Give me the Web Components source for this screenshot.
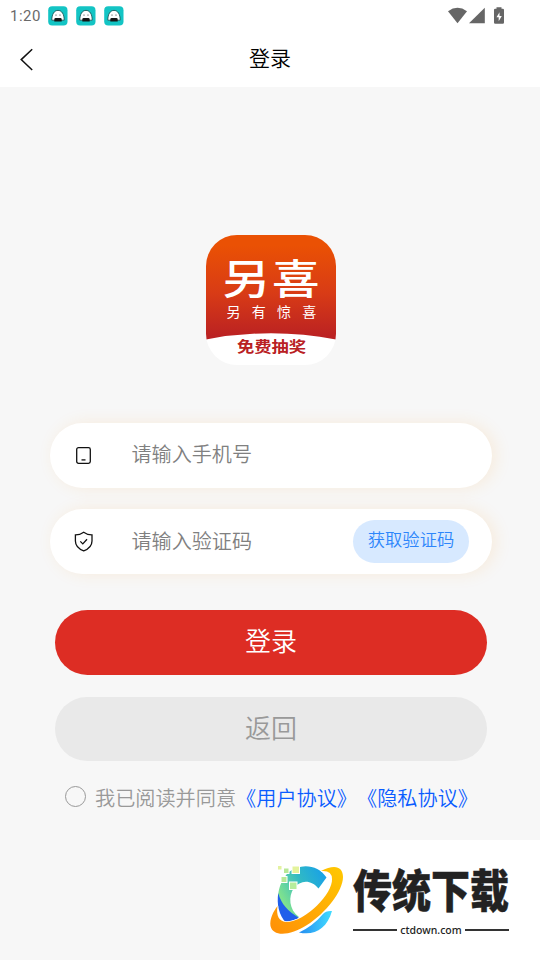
<!DOCTYPE html>
<html lang="zh-CN">
<head>
<meta charset="utf-8">
<meta name="viewport" content="width=device-width, initial-scale=1">
<title>登录</title>
<style>
    html, body {
        margin: 0;
        height: 100%;
        overflow: hidden;
    }
    body {
        background: #f7f7f7;
        font-family: Roboto, "Noto Sans CJK SC", sans-serif;
        font-weight: 350;
        text-spacing-trim: space-all;
    }
</style>
</head>
<body>
<login-page>
    <status-bar slot="top" time="1:20"></status-bar>
    <nav-bar slot="top">登录</nav-bar>
    <app-logo>
        <span slot="name">另喜</span>
        <span slot="slogan">另有惊喜</span>
        <span slot="ribbon">免费抽奖</span>
    </app-logo>
    <input-field icon="phone">请输入手机号</input-field>
    <input-field icon="shield">请输入验证码<code-button slot="action">获取验证码</code-button></input-field>
    <pill-button kind="primary">登录</pill-button>
    <pill-button kind="plain">返回</pill-button>
    <agree-row>我已阅读并同意<span slot="links">《用户协议》《隐私协议》</span></agree-row>
    <site-badge slot="badge">传统下载<span slot="domain">ctdown.com</span></site-badge>
</login-page>

<script>
    class LoginPage extends HTMLElement {
        constructor() {
            super();
            this.attachShadow({ mode: 'open' });
            this.shadowRoot.innerHTML = `
            <style>
                :host {
                    display: block;
                    position: relative;
                    width: 540px;
                    height: 960px;
                    overflow: hidden;
                    background: #f7f7f7;
                }
                header {
                    background: #fff;
                    height: 87px;
                }
                main {
                    display: flex;
                    flex-direction: column;
                    padding: 148px 48px 0 50px;
                }
            </style>
            <header><slot name="top"></slot></header>
            <main><slot></slot></main>
            <slot name="badge"></slot>
            `;
        }
    }
    customElements.define('login-page', LoginPage);

    class StatusBar extends HTMLElement {
        constructor() {
            super();
            this.attachShadow({ mode: 'open' });
            const app = `
                <svg width="20" height="20" viewBox="0 0 20 20">
                    <rect x=".2" y=".2" width="19.3" height="19.3" rx="4" fill="#13c4c4"/>
                    <path d="M3.8 14.2c0-6 2.4-9.8 6.2-9.8s6.2 3.8 6.2 9.8z" fill="#fff" stroke="#17494b" stroke-width=".8"/>
                    <path d="M6.3 15.5v-2.1q0-1.3 1.3-1.3h4.8q1.3 0 1.3 1.3v2.1z" fill="#151515"/>
                    <circle cx="8" cy="9" r=".6" fill="#222"/><circle cx="12" cy="9" r=".6" fill="#222"/>
                </svg>`;
            this.shadowRoot.innerHTML = `
            <style>
                :host {
                    display: flex;
                    align-items: center;
                    height: 31px;
                    padding: 0 35px 0 10px;
                    box-sizing: border-box;
                    color: #6a6a6a;
                    font: 400 15px/31px Roboto, sans-serif;
                }
                time { width: 38px; letter-spacing: .5px; padding-top: 1px; }
                .apps { display: flex; gap: 8px; flex: 1; }
                svg { display: block; }
            </style>
            <time>${this.getAttribute('time')}</time>
            <div class="apps">${app}${app}${app}</div>
            <svg width="58" height="20" viewBox="447 5 58 20" fill="#666">
                <path d="M448 10.2Q457.5 3.3 467 10.2L457.5 22.3z"/>
                <path d="M484.8 6.8v15.5H469z"/>
                <path d="M496.5 7.8v-1.5h5v1.5h1.3q1.2 0 1.2 1.2v12.5q0 1.2-1.2 1.2h-7.6q-1.2 0-1.2-1.2V9q0-1.2 1.2-1.2z"/>
                <path d="M499.5 11.2l-3 5h2.2v4l3.1-5.3h-2.3z" fill="#fff"/>
            </svg>
            `;
        }
    }
    customElements.define('status-bar', StatusBar);

    class NavBar extends HTMLElement {
        constructor() {
            super();
            this.attachShadow({ mode: 'open' });
            this.shadowRoot.innerHTML = `
            <style>
                :host {
                    display: grid;
                    grid-template-columns: 54px 1fr 54px;
                    align-items: center;
                    height: 56px;
                    color: #000;
                    font-size: 21px;
                    line-height: 56px;
                    text-align: center;
                }
                svg { display: block; margin-left: 18px; }
            </style>
            <svg width="18" height="24" viewBox="0 0 18 24" fill="none" stroke="#111" stroke-width="1.5">
                <path d="M14.2 2.2L3.2 12.6l11 10.4"/>
            </svg>
            <span><slot></slot></span>
            `;
        }
    }
    customElements.define('nav-bar', NavBar);

    class AppLogo extends HTMLElement {
        constructor() {
            super();
            this.attachShadow({ mode: 'open' });
            this.shadowRoot.innerHTML = `
            <style>
                :host {
                    display: grid;
                    width: 130px;
                    height: 130px;
                    margin: 0 0 58px 156px;
                    border-radius: 31px;
                    overflow: hidden;
                    background: #fff;
                    color: #fff;
                }
                svg, .texts { grid-area: 1 / 1; }
                .texts {
                    display: flex;
                    flex-direction: column;
                    align-items: center;
                    white-space: nowrap;
                }
                .name {
                    font-size: 44px;
                    line-height: 50px;
                    height: 48px;
                    font-weight: 500;
                    letter-spacing: 2px;
                    margin: 20px 0 0 2px;
                    transform: scale(1.08, .94);
                }
                .slogan {
                    font-size: 14px;
                    line-height: 18px;
                    font-weight: 400;
                    letter-spacing: 11.3px;
                    padding-left: 12px;
                }
                .ribbon {
                    color: #b92023;
                    font-size: 17.3px;
                    line-height: 20px;
                    font-weight: 700;
                    margin: 16px 0 0 1px;
                    transform: scaleY(.88);
                }
            </style>
            <svg width="130" height="130" viewBox="0 0 130 130">
                <defs>
                    <linearGradient id="bg" gradientUnits="userSpaceOnUse" x1="0" y1="0" x2="0" y2="130">
                        <stop offset=".08" stop-color="#ea5104"/>
                        <stop offset=".45" stop-color="#d83b16"/>
                        <stop offset=".8" stop-color="#b92023"/>
                    </linearGradient>
                </defs>
                <path d="M0 0H130V104.5Q65 92 0 104.5z" fill="url(#bg)"/>
            </svg>
            <div class="texts">
                <div class="name"><slot name="name"></slot></div>
                <div class="slogan"><slot name="slogan"></slot></div>
                <div class="ribbon"><slot name="ribbon"></slot></div>
            </div>
            `;
        }
    }
    customElements.define('app-logo', AppLogo);

    const fieldIcons = {
        phone: `<rect x="3.7" y="2.7" width="13.6" height="15.6" rx="1.8"/><path d="M8.5 14.9h4"/>`,
        shield: `<path d="M10.7 1.2Q14.5 4 19 3.9V10q0 6.6-8.3 9.9Q2.4 16.6 2.4 10V3.9Q6.9 4 10.7 1.2zM7.3 10.4l2.5 2.5 4.2-4.7"/>`
    };

    class InputField extends HTMLElement {
        constructor() {
            super();
            this.attachShadow({ mode: 'open' });
            this.shadowRoot.innerHTML = `
            <style>
                :host {
                    display: flex;
                    align-items: center;
                    box-sizing: border-box;
                    height: 65px;
                    margin-bottom: 21px;
                    padding: 0 23px;
                    border-radius: 33px;
                    background: #fff;
                    box-shadow: 4px 0 16px rgba(255, 165, 50, .13);
                    color: #808080;
                    font-size: 20.1px;
                    line-height: 64px;
                }
                :host([icon="shield"]) { line-height: 66px; }
                svg { display: block; width: 22px; margin-right: 36.5px; }
                span { flex: 1; height: 65px; }
            </style>
            <svg height="22" viewBox="0 0 22 22" fill="none" stroke="#111" stroke-width="1.3">${fieldIcons[this.getAttribute('icon')]}</svg>
            <span><slot></slot></span>
            <slot name="action"></slot>
            `;
        }
    }
    customElements.define('input-field', InputField);

    class CodeButton extends HTMLElement {
        constructor() {
            super();
            this.attachShadow({ mode: 'open' });
            this.shadowRoot.innerHTML = `
            <style>
                :host {
                    display: block;
                    width: 116px;
                    height: 43px;
                    border-radius: 22px;
                    background: #d7e9ff;
                    color: #2d86fb;
                    font-size: 17.3px;
                    line-height: 41px;
                    text-align: center;
                }
            </style>
            <slot></slot>
            `;
        }
    }
    customElements.define('code-button', CodeButton);

    class PillButton extends HTMLElement {
        constructor() {
            super();
            this.attachShadow({ mode: 'open' });
            this.shadowRoot.innerHTML = `
            <style>
                :host {
                    display: block;
                    height: 65px;
                    margin: 15px 5px 0;
                    border-radius: 33px;
                    font-size: 26px;
                    line-height: 64px;
                    text-align: center;
                }
                :host([kind="primary"]) {
                    background: #dd2d24;
                    color: #fff;
                }
                :host([kind="plain"]) {
                    height: 64px;
                    margin-top: 22px;
                    background: #e9e9e9;
                    color: #999;
                }
            </style>
            <slot></slot>
            `;
        }
    }
    customElements.define('pill-button', PillButton);

    class AgreeRow extends HTMLElement {
        constructor() {
            super();
            this.attachShadow({ mode: 'open' });
            this.shadowRoot.innerHTML = `
            <style>
                :host {
                    display: flex;
                    align-items: center;
                    margin: 20px 0 0 15px;
                    height: 31px;
                    color: #999;
                    font-size: 20.16px;
                    line-height: 31px;
                    white-space: nowrap;
                }
                i {
                    box-sizing: border-box;
                    width: 21px;
                    height: 21px;
                    margin-right: 9px;
                    border: 1px solid #999;
                    border-radius: 50%;
                }
                span { padding-top: 5px; }
                .links { color: #0a5cff; }
            </style>
            <i></i><span><slot></slot></span><span class="links"><slot name="links"></slot></span>
            `;
        }
    }
    customElements.define('agree-row', AgreeRow);

    class SiteBadge extends HTMLElement {
        constructor() {
            super();
            this.attachShadow({ mode: 'open' });
            this.shadowRoot.innerHTML = `
            <style>
                :host {
                    position: absolute;
                    right: 0;
                    bottom: 0;
                    display: flex;
                    box-sizing: border-box;
                    width: 280px;
                    height: 120px;
                    padding-left: 5px;
                    background: #fff;
                    color: #222;
                }
                svg { display: block; flex: none; }
                .words { width: 156px; margin: 24px 0 0 3px; }
                .title {
                    height: 58px;
                    font-size: 39px;
                    line-height: 59px;
                    font-weight: 900;
                    white-space: nowrap;
                    -webkit-text-stroke: .4px #222;
                    transform: scaleY(1.17);
                }
                .domain {
                    display: flex;
                    align-items: center;
                    gap: 3px;
                    font: 500 10.5px/16px "Noto Sans", sans-serif;
                }
                .domain::before, .domain::after {
                    content: "";
                    flex: 1;
                    height: 2px;
                    background: #333;
                }
            </style>
            <svg width="85" height="120" viewBox="265 840 85 120">
                <defs>
                    <linearGradient id="ring" x1="1" y1="0" x2="0" y2="1">
                        <stop offset="0" stop-color="#ffc800"/>
                        <stop offset="1" stop-color="#ff8f08"/>
                    </linearGradient>
                    <linearGradient id="arc" x1="0" y1=".6" x2="1" y2="0">
                        <stop offset="0" stop-color="#8be886"/>
                        <stop offset=".5" stop-color="#30b9c5"/>
                        <stop offset="1" stop-color="#149cee"/>
                    </linearGradient>
                    <linearGradient id="tail">
                        <stop offset="0" stop-color="#258cf0"/>
                        <stop offset="1" stop-color="#42dcff"/>
                    </linearGradient>
                </defs>
                <path d="M326.5 877.5C318 864 300 863 289 872C276 884 274 906 286 922L299 917C289 910 288 896 294 888C300 880 311 879 318.5 888.5z" fill="url(#arc)"/>
                <path d="M278.3 893C276.5 904 279 915 286 923L299 918C288 911 281 904 278.3 893z" fill="#205fea"/>
                <path d="M299 932.5C314 936 327 929 332 911Q326 910.5 323 914Q313 926 299 932.5z" fill="url(#tail)"/>
                <path d="M321 871C334 864 343 866 343 877C343 891 326 913 307 925C290 936 273 937 270.5 926C269.5 919 273 912 277.5 906C276 916 279 921 286 922C306 922 333 893 332 879Q332 870 321 871z" fill="url(#ring)" stroke="#fff" stroke-width="1.5" paint-order="stroke"/>
                <g stroke="#fff">
                    <rect x="277.5" y="865.5" width="4.5" height="4.5" fill="#e3f2a0"/>
                    <rect x="283.5" y="868" width="5.5" height="5.5" fill="#b8e897"/>
                    <rect x="292" y="866" width="7.5" height="7.5" fill="#e4f39c"/>
                    <rect x="281" y="876.5" width="6" height="6" fill="#b8e897"/>
                    <rect x="289.5" y="882" width="7.5" height="7.5" fill="#b7ed9c"/>
                </g>
            </svg>
            <div class="words">
                <div class="title"><slot></slot></div>
                <div class="domain"><slot name="domain"></slot></div>
            </div>
            `;
        }
    }
    customElements.define('site-badge', SiteBadge);
</script>
</body>
</html>
